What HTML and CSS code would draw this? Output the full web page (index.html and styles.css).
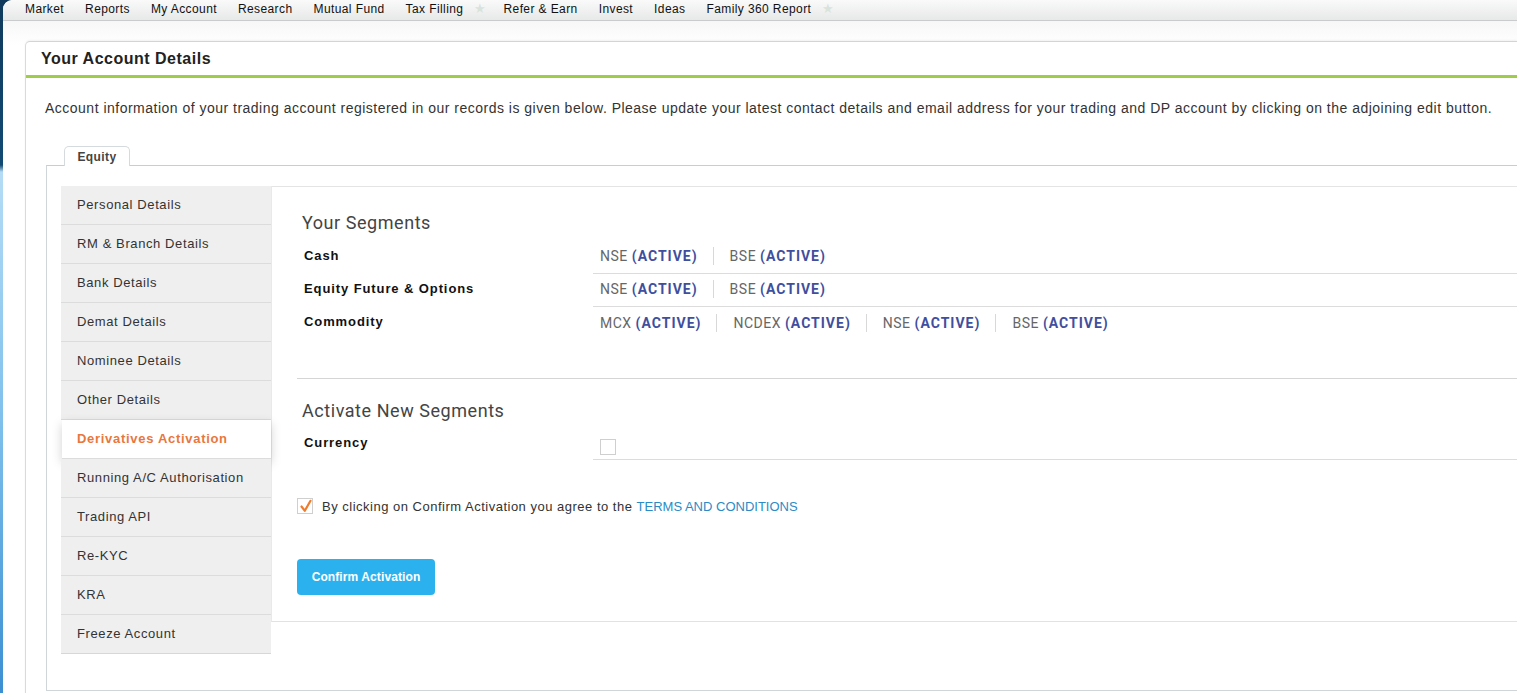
FILE: index.html
```html
<!DOCTYPE html>
<html>
<head>
<meta charset="utf-8">
<link rel="stylesheet" href="styles.css">
</head>
<body>
<div class="page">
  <nav class="topnav">
    <a>Market</a>
    <a>Reports</a>
    <a>My Account</a>
    <a>Research</a>
    <a>Mutual Fund</a>
    <a class="starred">Tax Filling <span class="star">★</span></a>
    <a>Refer &amp; Earn</a>
    <a>Invest</a>
    <a>Ideas</a>
    <a class="starred">Family 360 Report <span class="star">★</span></a>
  </nav>
  <div class="stage">
    <section class="panel">
      <h1 class="panel-title">Your Account Details</h1>
      <p class="intro">Account information of your trading account registered in our records is given below. Please update your latest contact details and email address for your trading and DP account by clicking on the adjoining edit button.</p>
      <div class="tabs">
        <div class="tab-strip"><span class="tab">Equity</span></div>
        <div class="tab-body">
          <ul class="side">
            <li>Personal Details</li>
            <li>RM &amp; Branch Details</li>
            <li>Bank Details</li>
            <li>Demat Details</li>
            <li>Nominee Details</li>
            <li>Other Details</li>
            <li class="active">Derivatives Activation</li>
            <li>Running A/C Authorisation</li>
            <li>Trading API</li>
            <li>Re-KYC</li>
            <li>KRA</li>
            <li>Freeze Account</li>
          </ul>
          <div class="content">
            <h2 class="sec-title">Your Segments</h2>
            <div class="seg-row">
              <div class="seg-label">Cash</div>
              <div class="seg-vals">
                <span class="seg">NSE <b>(ACTIVE)</b></span>
                <span class="seg">BSE <b>(ACTIVE)</b></span>
              </div>
            </div>
            <div class="seg-row">
              <div class="seg-label">Equity Future &amp; Options</div>
              <div class="seg-vals">
                <span class="seg">NSE <b>(ACTIVE)</b></span>
                <span class="seg">BSE <b>(ACTIVE)</b></span>
              </div>
            </div>
            <div class="seg-row last">
              <div class="seg-label">Commodity</div>
              <div class="seg-vals">
                <span class="seg">MCX <b>(ACTIVE)</b></span>
                <span class="seg">NCDEX <b>(ACTIVE)</b></span>
                <span class="seg">NSE <b>(ACTIVE)</b></span>
                <span class="seg">BSE <b>(ACTIVE)</b></span>
              </div>
            </div>
            <hr class="divider">
            <h2 class="sec-title second">Activate New Segments</h2>
            <div class="seg-row new">
              <div class="seg-label">Currency</div>
              <div class="seg-vals"><span class="box"></span></div>
            </div>
            <div class="agree">
              <span class="box checked"><svg viewBox="0 0 16 16" width="16" height="16"><path d="M3.5 8.5 L6.8 12.8 L12.5 2.8" fill="none" stroke="#ef7b2d" stroke-width="2.2" stroke-linecap="round" stroke-linejoin="round"/></svg></span>
              <span>By clicking on Confirm Activation you agree to the <a class="terms">TERMS AND CONDITIONS</a></span>
            </div>
            <button class="confirm">Confirm Activation</button>
          </div>
        </div>
      </div>
    </section>
  </div>
</div>
</body>
</html>
```

FILE: styles.css
```css
html, body {
  margin: 0;
  padding: 0;
  height: 100%;
}
body {
  overflow: hidden;
  background: linear-gradient(to bottom, #0f3a5c 0, #124a74 165px, #b5dcf6 172px, #7fc0ec 420px, #3b8fd2 693px);
  font-family: "Liberation Sans", Arial, sans-serif;
  color: #333;
}
.page {
  margin-left: 3px;
  height: 100%;
  background: #fff;
  border-top-left-radius: 9px;
  overflow: hidden;
}
.topnav {
  height: 17px;
  padding-bottom: 3px;
  display: flex;
  align-items: center;
  padding-left: 22px;
  background: linear-gradient(to bottom, #fafafa, #e7e8e8);
  border-bottom: 1px solid #c9cbcc;
  border-top-left-radius: 9px;
  font-size: 12px;
  color: #111;
}
.topnav a {
  margin-right: 21px;
  letter-spacing: 0.4px;
  white-space: nowrap;
}
.topnav a.starred { margin-right: 17px; }
.star {
  color: #d9e3dc;
  font-size: 13px;
  margin-left: 7px;
}
.stage {
  padding: 20px 0 0 22px;
  background: linear-gradient(to bottom, #f7f7f7 0, #ffffff 24px);
}
.panel {
  border-top: 1px solid #d4d4d4;
  border-left: 1px solid #dadada;
  border-top-left-radius: 5px;
  background: #fff;
  box-shadow: 0 -1px 2px rgba(0,0,0,0.05);
  padding-bottom: 40px;
}
.panel-title {
  margin: 0;
  height: 33px;
  line-height: 33px;
  padding-left: 15px;
  font-size: 16px;
  font-weight: bold;
  letter-spacing: 0.5px;
  color: #222;
  border-bottom: 3px solid #9fcd4b;
}
.intro {
  margin: 0;
  padding: 21px 0 0 19px;
  font-size: 14px;
  line-height: 18px;
  letter-spacing: 0.49px;
  color: #333;
  white-space: nowrap;
}
.tabs {
  margin: 29px 0 0 20px;
}
.tab-strip {
  height: 19px;
  padding-left: 18px;
  display: flex;
  align-items: flex-end;
}
.tab {
  display: inline-block;
  width: 64px;
  height: 19px;
  line-height: 20px;
  text-align: center;
  font-size: 12px;
  font-weight: bold;
  color: #444;
  letter-spacing: 0.4px;
  border: 1px solid #d4dadd;
  border-bottom: none;
  border-radius: 5px 5px 0 0;
  background: #fff;
  position: relative;
  top: 1px;
}
.tab-body {
  border-top: 1px solid #c3cfd4;
  border-left: 1px solid #cfd5d8;
  border-bottom: 1px solid #cfd5d8;
  padding: 20px 0 36px 14px;
  display: flex;
  align-items: flex-start;
}
.side {
  list-style: none;
  margin: 0;
  padding: 0;
  width: 210px;
  flex-shrink: 0;
  border-bottom: 1px solid #d7d7d7;
  position: relative;
  z-index: 1;
}
.side li {
  height: 38px;
  line-height: 38px;
  padding-left: 16px;
  background: #efefef;
  border-bottom: 1px solid #dcdcdc;
  font-size: 13px;
  letter-spacing: 0.6px;
  color: #333;
}
.side li:last-child { border-bottom: none; }
.side li.active {
  background: #fff;
  color: #e8773e;
  font-weight: bold;
  letter-spacing: 0.7px;
  margin-left: 1px;
  padding-left: 15px;
  box-shadow: 0 4px 10px rgba(0,0,0,0.18);
}
.content {
  flex: 1;
  min-width: 0;
  border-top: 1px solid #e4e4e4;
  border-left: 1px solid #e9e9e9;
  border-bottom: 1px solid #e2e2e2;
  padding: 24px 0 26px 25px;
}
.sec-title {
  margin: 0 0 0 5px;
  font-family: Roboto, "Liberation Sans", sans-serif;
  font-weight: normal;
  font-size: 18px;
  line-height: 24px;
  letter-spacing: 0.55px;
  color: #444;
}
.sec-title.second { margin-top: 20px; }
.seg-row {
  display: flex;
  height: 33px;
  align-items: stretch;
}
.seg-row:first-of-type { margin-top: 6px; }
.seg-label {
  width: 289px;
  padding-left: 7px;
  flex-shrink: 0;
  font-size: 13px;
  font-weight: bold;
  letter-spacing: 0.9px;
  color: #111;
  line-height: 30px;
}
.seg-vals {
  flex: 1;
  display: flex;
  align-items: center;
  padding-left: 7px;
  border-bottom: 1px solid #dcdcdc;
  padding-bottom: 2px;
}
.seg-row.last .seg-vals { border-bottom: none; }
.seg {
  font-family: Roboto, "Liberation Sans", sans-serif;
  font-size: 14px;
  color: #666;
  padding: 0 15px 0 16px;
  border-left: 1px solid #d8d8d8;
  line-height: 18px;
  letter-spacing: 0.5px;
}
.seg:first-child { padding-left: 0; border-left: none; }
.seg b {
  color: #3f4f9e;
  font-weight: bold;
  letter-spacing: 1px;
}
.divider {
  margin: 38px 0 0 0;
  border: none;
  border-top: 1px solid #d5d5d5;
  height: 0;
}
.seg-row.new { height: 30px; margin-top: 7px; }
.seg-row.new .seg-label { line-height: 26px; }
.seg-row.new .seg-vals { align-items: flex-start; padding-top: 9px; padding-bottom: 0; }
.box {
  display: inline-block;
  width: 14px;
  height: 14px;
  border: 1px solid #cfcfcf;
  background: #fff;
  position: relative;
}
.agree {
  display: flex;
  align-items: center;
  margin: 38px 0 0 0;
  font-size: 13px;
  letter-spacing: 0.5px;
  color: #333;
}
.agree .box { margin-right: 9px; }
.agree .box svg { position: absolute; left: 0; top: -1px; }
.terms {
  color: #2b8bc6;
  letter-spacing: 0px;
}
.confirm {
  display: block;
  margin: 45px 0 0 0;
  width: 138px;
  height: 36px;
  border: none;
  border-radius: 4px;
  background: #2cb1ef;
  color: #fff;
  font-family: "Liberation Sans", Arial, sans-serif;
  font-weight: bold;
  font-size: 12px;
  letter-spacing: 0.1px;
}
```
